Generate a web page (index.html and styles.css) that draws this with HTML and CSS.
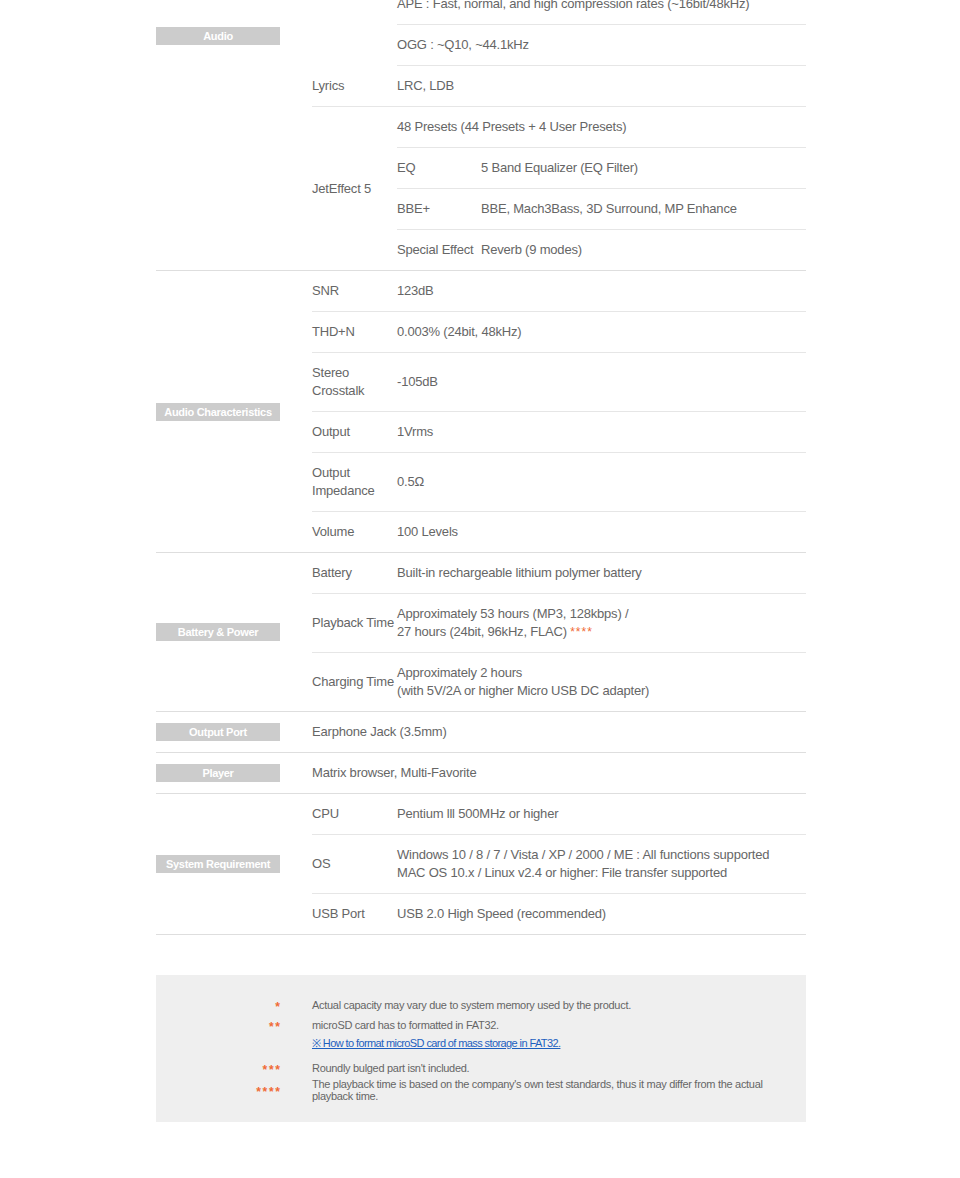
FILE: index.html
```html
<!DOCTYPE html>
<html lang="en">
<head>
<meta charset="utf-8">
<title>Specifications</title>
<link rel="stylesheet" href="styles.css">
</head>
<body>
<main class="page">
  <div class="specs">
    <section class="group">
      <div class="label"><span class="tag">Audio</span></div>
      <div class="rows">
        <div class="row open">
          <div class="key"></div>
          <div class="subrows closed scrolled">
            <div class="val">APE : Fast, normal, and high compression rates (~16bit/48kHz)</div>
            <div class="val">OGG : ~Q10, ~44.1kHz</div>
          </div>
        </div>
        <div class="row">
          <div class="key">Lyrics</div>
          <div class="val">LRC, LDB</div>
        </div>
        <div class="row">
          <div class="key">JetEffect 5</div>
          <div class="subrows">
            <div class="val">48 Presets (44 Presets + 4 User Presets)</div>
            <div class="pair"><div class="key">EQ</div><div class="val">5 Band Equalizer (EQ Filter)</div></div>
            <div class="pair"><div class="key">BBE+</div><div class="val">BBE, Mach3Bass, 3D Surround, MP Enhance</div></div>
            <div class="pair"><div class="key">Special Effect</div><div class="val">Reverb (9 modes)</div></div>
          </div>
        </div>
      </div>
    </section>

    <section class="group">
      <div class="label"><span class="tag">Audio Characteristics</span></div>
      <div class="rows">
        <div class="row"><div class="key">SNR</div><div class="val">123dB</div></div>
        <div class="row"><div class="key">THD+N</div><div class="val">0.003% (24bit, 48kHz)</div></div>
        <div class="row"><div class="key">Stereo<br>Crosstalk</div><div class="val">-105dB</div></div>
        <div class="row"><div class="key">Output</div><div class="val">1Vrms</div></div>
        <div class="row"><div class="key">Output<br>Impedance</div><div class="val">0.5Ω</div></div>
        <div class="row"><div class="key">Volume</div><div class="val">100 Levels</div></div>
      </div>
    </section>

    <section class="group">
      <div class="label"><span class="tag">Battery &amp; Power</span></div>
      <div class="rows">
        <div class="row"><div class="key">Battery</div><div class="val">Built-in rechargeable lithium polymer battery</div></div>
        <div class="row"><div class="key">Playback Time</div><div class="val">Approximately 53 hours (MP3, 128kbps) /<br>27 hours (24bit, 96kHz, FLAC) <span class="star">****</span></div></div>
        <div class="row"><div class="key">Charging Time</div><div class="val">Approximately 2 hours<br>(with 5V/2A or higher Micro USB DC adapter)</div></div>
      </div>
    </section>

    <section class="group">
      <div class="label"><span class="tag">Output Port</span></div>
      <div class="rows">
        <div class="row single"><div class="val">Earphone Jack (3.5mm)</div></div>
      </div>
    </section>

    <section class="group">
      <div class="label"><span class="tag">Player</span></div>
      <div class="rows">
        <div class="row single"><div class="val">Matrix browser, Multi-Favorite</div></div>
      </div>
    </section>

    <section class="group">
      <div class="label"><span class="tag">System Requirement</span></div>
      <div class="rows">
        <div class="row"><div class="key">CPU</div><div class="val">Pentium lll 500MHz or higher</div></div>
        <div class="row"><div class="key">OS</div><div class="val">Windows 10 / 8 / 7 / Vista / XP / 2000 / ME : All functions supported<br>MAC OS 10.x / Linux v2.4 or higher: File transfer supported</div></div>
        <div class="row"><div class="key">USB Port</div><div class="val">USB 2.0 High Speed (recommended)</div></div>
      </div>
    </section>
  </div>

  <aside class="notes">
    <div class="note"><span class="mark">*</span><p>Actual capacity may vary due to system memory used by the product.</p></div>
    <div class="note"><span class="mark">**</span><p>microSD card has to formatted in FAT32.</p></div>
    <div class="note link-note"><span class="mark"></span><p><a href="#">※ How to format microSD card of mass storage in FAT32.</a></p></div>
    <div class="note"><span class="mark">***</span><p>Roundly bulged part isn't included.</p></div>
    <div class="note tight"><span class="mark">****</span><p>The playback time is based on the company's own test standards, thus it may differ from the actual playback time.</p></div>
  </aside>
</main>
</body>
</html>
```

FILE: styles.css
```css
html, body {
  margin: 0;
  background: #fff;
}
body {
  padding-left: 2px;
  font-family: "Liberation Sans", Arial, sans-serif;
  color: #666;
}
.page {
  width: 650px;
  margin: -198px auto 0;
  padding-bottom: 56px;
}
.specs {
  font-size: 13px;
  letter-spacing: -0.2px;
  line-height: 18px;
}
.group {
  display: grid;
  grid-template-columns: 156px 1fr;
  border-bottom: 1px solid #dedede;
}
.label {
  display: flex;
  align-items: center;
}
.tag {
  display: block;
  width: 124px;
  height: 18px;
  line-height: 18px;
  background: #cccccc;
  color: #fff;
  font-weight: bold;
  font-size: 11px;
  letter-spacing: -0.3px;
  text-align: center;
}
.rows {
  display: flex;
  flex-direction: column;
}
.row {
  display: grid;
  grid-template-columns: 85px 1fr;
  align-items: center;
  border-bottom: 1px solid #e6e6e6;
}
.row:last-child,
.row.open {
  border-bottom: 0;
}
.row.single {
  grid-template-columns: 1fr;
}
.key {
  padding: 11px 0;
  white-space: nowrap;
}
.val {
  padding: 11px 0;
}
.subrows {
  display: flex;
  flex-direction: column;
}
.subrows.scrolled {
  padding-top: 182px;
}
.subrows > * {
  border-bottom: 1px solid #e6e6e6;
}
.subrows > *:last-child {
  border-bottom: 0;
}
.subrows.closed > *:last-child {
  border-bottom: 1px solid #e6e6e6;
}
.pair {
  display: grid;
  grid-template-columns: 84px 1fr;
  align-items: center;
}
.star {
  color: #f06a35;
  font-size: 12px;
  letter-spacing: 1px;
}
.notes {
  margin-top: 40px;
  background: #efefef;
  padding: 20px 0;
  font-size: 11px;
  letter-spacing: -0.3px;
}
.note {
  display: grid;
  grid-template-columns: 124px 1fr;
  column-gap: 32px;
  align-items: center;
  line-height: 20px;
}
.note p {
  margin: 0;
  max-width: 462px;
}
.mark {
  text-align: right;
  color: #f06a35;
  font-weight: bold;
  font-size: 12px;
  line-height: 12px;
  letter-spacing: 1.7px;
  margin-right: -1.7px;
  padding-top: 4px;
}
.link-note {
  line-height: 16px;
  margin-bottom: 7px;
}
.link-note a {
  color: #1d5fbf;
  text-decoration: underline;
  letter-spacing: -0.6px;
}
.tight {
  line-height: 12px;
}
```
